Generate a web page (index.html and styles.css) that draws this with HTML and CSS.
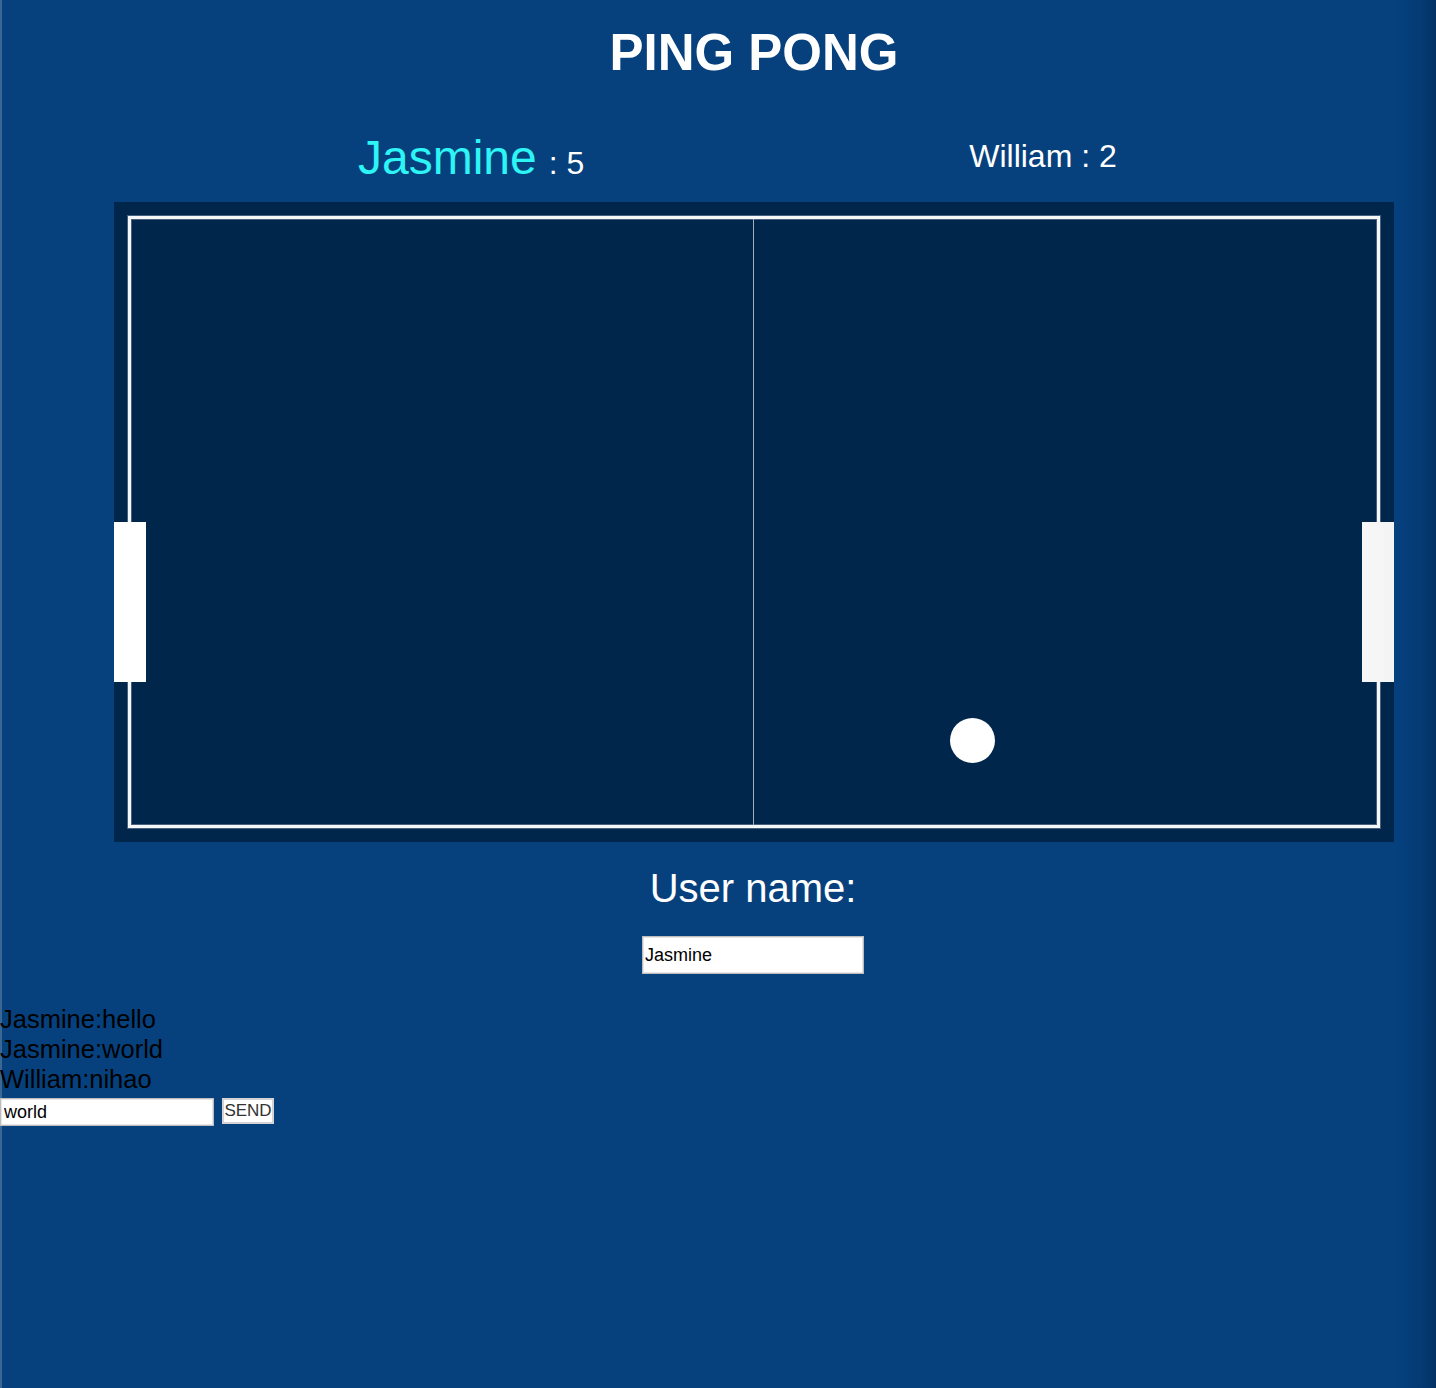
FILE: index.html
```html
<!DOCTYPE html>
<html lang="en">
<head>
<meta charset="utf-8">
<title>Ping Pong</title>
<link rel="stylesheet" href="styles.css">
</head>
<body>
<div class="edge-right"></div>
<main class="main">
  <h1 class="title">PING PONG</h1>
  <div class="scores">
    <div class="score score-left"><span class="player-active">Jasmine</span> : 5</div>
    <div class="score score-right">William : 2</div>
  </div>
  <div class="table">
    <div class="court">
      <div class="net"></div>
    </div>
    <div class="paddle paddle-left"></div>
    <div class="paddle paddle-right"></div>
    <div class="ball"></div>
  </div>
  <div class="user-label">User name:</div>
  <div class="user-row">
    <input class="user-input" type="text" value="Jasmine">
  </div>
</main>
<section class="chat">
  <div class="msg">Jasmine:hello</div>
  <div class="msg">Jasmine:world</div>
  <div class="msg">William:nihao</div>
  <div class="chat-form">
    <input class="chat-input" type="text" value="world">
    <button class="send-btn" type="button">SEND</button>
  </div>
</section>
</body>
</html>
```

FILE: styles.css
```css
html, body {
  margin: 0;
  padding: 0;
}
body {
  background: linear-gradient(to right, #3a6793 0, #3a6793 2px, #06417e 2px, #06417e 100%);
  font-family: "Liberation Sans", Arial, sans-serif;
  min-height: 1388px;
  color: #fff;
}
.edge-right {
  position: fixed;
  right: 0;
  top: 0;
  bottom: 0;
  width: 40px;
  background: linear-gradient(to right, rgba(0, 20, 50, 0) 0%, rgba(0, 20, 50, 0.12) 60%, rgba(0, 20, 50, 0.35) 100%);
  pointer-events: none;
  z-index: 5;
}
.main {
  margin-left: 114px;
  width: 1280px;
  text-align: center;
}
.title {
  margin: 0;
  padding-top: 24px;
  font-size: 51px;
  line-height: 58px;
  font-weight: bold;
  color: #fff;
}
.scores {
  display: flex;
  align-items: flex-start;
  margin-top: 48px;
  height: 55px;
  text-align: left;
}
.score-left {
  margin-left: 244px;
  font-size: 32px;
  line-height: 55px;
}
.player-active {
  font-size: 48px;
  color: #2ef5f5;
  margin-right: 3px;
}
.score-right {
  margin-left: 385px;
  margin-top: 8px;
  font-size: 32px;
  line-height: 37px;
}
.table {
  position: relative;
  margin-top: 17px;
  width: 1280px;
  height: 640px;
  background: #01264b;
}
.court {
  position: absolute;
  left: 14px;
  top: 14px;
  width: 1246px;
  height: 606px;
  border: 3px solid #f4f6f8;
  box-shadow: 0 0 0 1px rgba(200, 210, 220, 0.35), inset 0 0 0 1px rgba(200, 210, 220, 0.35);
}
.net {
  position: absolute;
  left: 622px;
  top: 0;
  bottom: 0;
  width: 1px;
  background: #9fadbd;
}
.paddle {
  position: absolute;
  top: 320px;
  width: 32px;
  height: 160px;
  background: #fff;
}
.paddle-left {
  left: 0;
}
.paddle-right {
  right: 0;
  background: linear-gradient(to right, #f7f7f7, #f4f4f4);
}
.ball {
  position: absolute;
  left: 836px;
  top: 516px;
  width: 45px;
  height: 45px;
  border-radius: 50%;
  background: #fff;
}
.user-label {
  margin-top: 23px;
  font-size: 40px;
  line-height: 46px;
  color: #fff;
  padding-right: 2px;
}
.user-row {
  margin-top: 25px;
  display: flex;
  justify-content: center;
}
.user-input {
  box-sizing: border-box;
  width: 222px;
  height: 38px;
  margin: 0 2px 0 0;
  padding: 0 2px;
  border: 1px solid #bdbdbd;
  box-shadow: inset 0 0 0 1px #e6e6e6;
  background: #fff;
  font-family: "Liberation Sans", Arial, sans-serif;
  font-size: 18px;
  color: #000;
  text-align: left;
}
.chat {
  margin-top: 30px;
  color: #000;
  font-size: 25.5px;
  line-height: 30px;
}
.msg {
  white-space: nowrap;
}
.chat-form {
  display: flex;
  align-items: flex-start;
  gap: 8px;
  margin-top: 4px;
}
.chat-input {
  box-sizing: border-box;
  width: 214px;
  height: 28px;
  margin: 0;
  padding: 0 3px;
  border: 1px solid #bdbdbd;
  box-shadow: inset 0 0 0 1px #e6e6e6;
  background: #fff;
  font-family: "Liberation Sans", Arial, sans-serif;
  font-size: 18px;
  color: #000;
}
.send-btn {
  box-sizing: border-box;
  width: 52px;
  height: 26px;
  margin: 0;
  padding: 0;
  border: 2px solid #d4d4d4;
  background: #fff;
  font-family: "Liberation Sans", Arial, sans-serif;
  font-size: 17px;
  color: #333;
  line-height: 22px;
}
```
